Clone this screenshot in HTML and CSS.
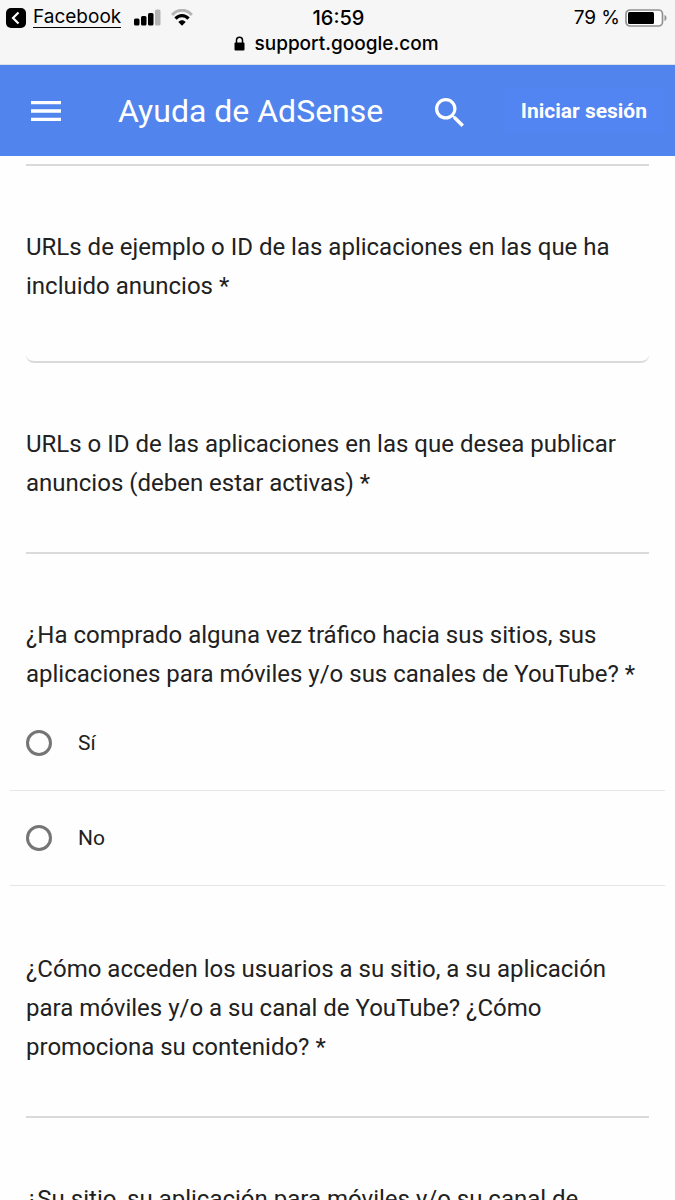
FILE: index.html
```html
<!DOCTYPE html>
<html lang="es">
<head>
<meta charset="utf-8">
<meta name="viewport" content="width=device-width, initial-scale=1">
<title>Ayuda de AdSense</title>
<link rel="stylesheet" href="styles.css">
</head>
<body>
<div class="screen">
  <div class="browser">
    <div class="status">
      <div class="status-left">
        <a class="back" href="#">
          <svg width="20" height="20" viewBox="0 0 20 20" aria-hidden="true"><rect width="20" height="20" rx="5"/><path d="M12.500 4.500 7 10l5.500 5.500" fill="none" stroke="#fff" stroke-width="2.200"/></svg>
          <span class="back-label">Facebook</span>
        </a>
        <svg class="signal" width="27" height="17" viewBox="0 0 27 17" aria-hidden="true"><rect y="9.500" width="5.500" height="7" rx="1.500"/><rect x="7" y="7" width="5.500" height="9.500" rx="1.500"/><rect x="14" y="4" width="5.500" height="12.500" rx="1.500"/><rect x="21" y="0.500" width="5.500" height="16" rx="1.500" fill="#b5b5b6"/></svg>
        <svg class="wifi" width="22" height="17" viewBox="0 0 22 17" aria-hidden="true"><path d="M1.200 6C6.500-.3 15.500-.3 20.800 6" fill="none" stroke="#b5b5b6" stroke-width="3"/><path d="M4.500 9.600c3.700-4 9.300-4 13 0" fill="none" stroke="#000" stroke-width="3.200"/><path d="M7.300 13c2.200-2.200 5.200-2.200 7.400 0L11 16.800z"/></svg>
      </div>
      <div class="clock">16:59</div>
      <div class="status-right">
        <span>79 %</span>
        <svg width="42" height="18" viewBox="0 0 42 18" aria-hidden="true"><rect x="1" y="1" width="36.500" height="16" rx="4" fill="#fff" stroke="#929292" stroke-width="1.700"/><rect x="3" y="3" width="26" height="12" rx="1.500"/><path d="M39.500 6c2.700.6 2.700 5.400 0 6z" fill="#929292"/></svg>
      </div>
    </div>
    <div class="address">
      <svg width="11" height="15" viewBox="0 0 11 15" aria-hidden="true"><path d="M2.500 7V4.200a3 3 0 0 1 6 0V7" fill="none" stroke="#000" stroke-width="1.500"/><rect x=".5" y="6.500" width="10" height="8" rx="1"/></svg>
      <span>support.google.com</span>
    </div>
  </div>
  <header class="appbar">
    <button class="icon-button" type="button" aria-label="Menú">
      <svg width="30" height="20" viewBox="0 0 30 20"><path d="M0 0h30v3.300H0zM0 8.300h30v3.400H0zM0 16.700h30V20H0z" fill="#fff"/></svg>
    </button>
    <h1 class="title">Ayuda de AdSense</h1>
    <button class="icon-button search" type="button" aria-label="Buscar">
      <svg width="29" height="29" viewBox="3 3 17.500 17.500"><path fill="#fff" d="M15.500 14h-.79l-.28-.27A6.471 6.471 0 0 0 16 9.500 6.500 6.500 0 1 0 9.500 16c1.610 0 3.090-.59 4.230-1.570l.27.28v.79l5 4.990L20.490 19l-4.990-5zm-6 0C7.010 14 5 11.990 5 9.500S7.010 5 9.500 5 14 7.010 14 9.500 11.990 14 9.500 14z"/></svg>
    </button>
    <button class="signin" type="button">Iniciar sesión</button>
  </header>
  <main class="content">
    <form class="form">
      <input class="answer answer-first" type="text" aria-label="Respuesta">
      <div class="question">
        <label class="prompt" for="examples">URLs de ejemplo o ID de las aplicaciones en las que ha incluido anuncios *</label>
        <input class="answer answer-rounded" id="examples" type="text">
      </div>
      <div class="question">
        <label class="prompt" for="publish">URLs o ID de las aplicaciones en las que desea publicar anuncios (deben estar activas) *</label>
        <input class="answer" id="publish" type="text">
      </div>
      <fieldset class="question choices">
        <legend class="prompt">¿Ha comprado alguna vez tráfico hacia sus sitios, sus aplicaciones para móviles y/o sus canales de YouTube? *</legend>
        <label class="choice"><input class="radio" type="radio" name="traffic"><span>Sí</span></label>
        <label class="choice"><input class="radio" type="radio" name="traffic"><span>No</span></label>
      </fieldset>
      <div class="question">
        <label class="prompt" for="promotion">¿Cómo acceden los usuarios a su sitio, a su aplicación para móviles y/o a su canal de YouTube? ¿Cómo promociona su contenido? *</label>
        <input class="answer" id="promotion" type="text">
      </div>
      <div class="question">
        <p class="prompt">¿Su sitio, su aplicación para móviles y/o su canal de</p>
      </div>
    </form>
  </main>
</div>
</body>
</html>
```
FILE: styles.css
```css
* { box-sizing: border-box; }

body {
  margin: 0;
  background: #fefefe;
  color: #212121;
  font-family: Roboto, sans-serif;
}

.screen {
  display: flex;
  flex-direction: column;
  height: 100vh;
  overflow: hidden;
}

.browser {
  flex: none;
  padding: 5px 8px 8px 6px;
  background: #f6f6f6;
  border-bottom: 1px solid #dcdfe6;
  color: #000;
  font-family: Inter, sans-serif;
}

.status {
  display: grid;
  grid-template-columns: 1fr auto 1fr;
  align-items: center;
  height: 25px;
  font-size: 19px;
  line-height: 24px;
}

.status-left, .status-right, .back, .address {
  display: flex;
  align-items: center;
}

.back { gap: 7px; color: #000; text-decoration: none; }
.back-label { border-bottom: 1px solid #000; line-height: 20px; }
.signal { margin-left: 13px; }
.wifi { margin-left: 10px; }
.clock { padding-left: 4px; font-weight: 500; font-size: 20px; }
.status-right { justify-content: flex-end; gap: 5px; }

.address {
  justify-content: center;
  gap: 9px;
  height: 26px;
  font-size: 19px;
  font-weight: 500;
}

.appbar {
  display: flex;
  flex: none;
  align-items: center;
  height: 91px;
  padding: 0 10px 0 24px;
  background: #5184ec;
  color: #fff;
}

.icon-button {
  display: flex;
  align-items: center;
  justify-content: center;
  width: 44px;
  height: 44px;
  padding: 0;
  border: 0;
  background: none;
}

.title {
  flex: 1;
  margin: 0 0 0 50px;
  font-size: 32px;
  font-weight: 400;
  line-height: 40px;
}

.search { margin-right: 31px; padding-top: 4px; }

.signin {
  height: 46px;
  padding: 0 18px;
  border: 0;
  border-radius: 3px;
  background: #5385f2;
  color: #fff;
  font: 700 21px/30px Roboto, sans-serif;
}

.content {
  flex: 1;
  min-height: 0;
  overflow: hidden;
}

.form { padding: 0 26px; }

.answer {
  display: block;
  width: 100%;
  height: 51px;
  padding: 0;
  border: 0;
  border-bottom: 2px solid #dadada;
  background: transparent;
  color: inherit;
  font: inherit;
  font-size: 24px;
}

.answer-first { height: 10px; }
.answer-rounded { height: 57px; border-radius: 8px; }

.question {
  margin: 62px 0 0;
  padding: 0;
  border: 0;
}

.prompt {
  display: block;
  margin: 0;
  padding: 0;
  font-size: 24px;
  line-height: 39px;
}

.choices { padding-bottom: 2px; }
.choices .prompt { padding-bottom: 2px; }

.choice {
  display: flex;
  align-items: center;
  gap: 26px;
  height: 95px;
  margin: 0 -16px;
  padding: 0 16px;
  border-bottom: 1px solid #e6e6e6;
  font-size: 21px;
}

.radio {
  appearance: none;
  width: 26px;
  height: 26px;
  margin: 0;
  border: 3px solid #757575;
  border-radius: 50%;
}

.radio:checked { background: radial-gradient(#4285f4 45%, transparent 50%); }
```
